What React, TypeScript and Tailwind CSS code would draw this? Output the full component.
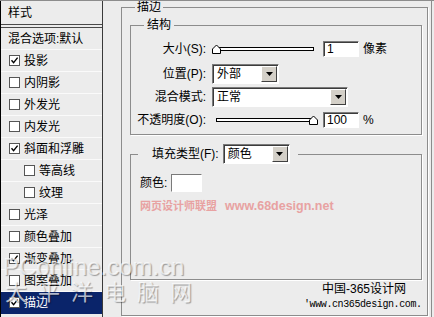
import React from "react";

const font = "font-['Liberation_Sans','Noto_Sans_CJK_SC',sans-serif]";

type Item = { label: string; on?: boolean; sub?: boolean; active?: boolean };

const items: Item[] = [
  { label: "投影", on: true },
  { label: "内阴影" },
  { label: "外发光" },
  { label: "内发光" },
  { label: "斜面和浮雕", on: true },
  { label: "等高线", sub: true },
  { label: "纹理", sub: true },
  { label: "光泽" },
  { label: "颜色叠加" },
  { label: "渐变叠加", on: true },
  { label: "图案叠加" },
  { label: "描边", on: true, active: true },
];

function Check({ on }: { on?: boolean }) {
  return (
    <span className="w-[11px] h-[11px] bg-white border border-[#555] flex items-center justify-center shrink-0">
      {on && (
        <svg width="9" height="9" viewBox="0 0 9 9">
          <path d="M1.5 4.2 L3.6 6.6 L7.6 1.6" stroke="#000" strokeWidth="1.4" fill="none" />
        </svg>
      )}
    </span>
  );
}

function Slider({ at }: { at: number }) {
  const x = 4.5 + at * 97;
  return (
    <svg width="108" height="10" viewBox="0 0 108 10" className="shrink-0">
      <rect x="4.5" y="3.5" width="97" height="3" fill="#fff" stroke="#000" />
      <path d={`M${x - 4} 9.5 V5 L${x} 1 L${x + 4} 5 V9.5 Z`} fill="#fff" stroke="#000" />
    </svg>
  );
}

function Field({ v }: { v: string }) {
  return (
    <div className="w-[36px] h-[16px] bg-white border border-[#7a7a7a] border-b-white border-r-white shadow-[inset_1px_1px_0_#3c3c3c] pl-[3px] text-[12px] leading-[14px]">
      {v}
    </div>
  );
}

function Select({ value, w }: { value: string; w: string }) {
  return (
    <div
      className={`${w} h-[20px] bg-white border border-[#7a7a7a] border-b-white border-r-white shadow-[inset_1px_1px_0_#3c3c3c] flex items-center shrink-0`}
    >
      <span className="flex-1 pl-[4px] text-[12px] leading-[14px]">{value}</span>
      <span className="w-[16px] h-[16px] mr-[1px] bg-[#d4d0c8] border border-white border-r-[#404040] border-b-[#404040] flex items-center justify-center">
        <svg width="7" height="4" viewBox="0 0 7 4">
          <path d="M0 0h7L3.5 4z" fill="#000" />
        </svg>
      </span>
    </div>
  );
}

function Row({ item }: { item: Item }) {
  return (
    <div
      className={`h-[22px] flex items-center gap-[4px] border-b ${item.sub ? "pl-[23px]" : "pl-[8px]"} ${
        item.active ? "bg-[#0a246a] text-white border-[#0a246a]" : "border-[#fafafa]"
      }`}
    >
      <Check on={item.on} />
      <span className="leading-[14px]">{item.label}</span>
    </div>
  );
}

export default function App() {
  return (
    <div
      className={`${font} relative w-[434px] h-[317px] overflow-hidden flex bg-[#ececec] text-black border-t border-[#8c8c8c] text-[12px]`}
    >
      {/* style list */}
      <div className="w-[103px] shrink-0 flex flex-col border-l border-l-black border-r border-r-[#3a3a3a]">
        <div className="h-[24px] flex items-center pl-[7px] border-b border-[#4a4a4a]">样式</div>
        <div className="h-[2px]" />
        <div className="border-t border-[#4a4a4a]">
          <div className="h-[22px] flex items-center pl-[7px] border-b border-[#fafafa]">混合选项:默认</div>
          {items.map((it) => (
            <Row key={it.label} item={it} />
          ))}
        </div>
      </div>

      {/* stroke settings */}
      <div className="flex-1 pl-[18px] pr-[3px] flex">
        <div className="flex-1 flex flex-col pr-[3px] pb-[1px] border-r border-[#8c8c8c]">
          <fieldset className="flex-1 border border-[#8c8c8c] shadow-[1px_1px_0_#fff]">
            <legend className="ml-[13px] px-[2px] leading-[13px]">描边</legend>
            <div className="pl-[8px] pr-[5px]">
              <fieldset className="mt-[5px] border border-[#8c8c8c] shadow-[1px_1px_0_#fff]">
                <legend className="ml-[13px] px-[3px] leading-[13px]">结构</legend>
                <div className="flex flex-col pb-[6px]">
                  <div className="mt-[9px] h-[16px] flex items-center">
                    <span className="w-[75px] text-right">大小(S):</span>
                    <span className="ml-[6px]"><Slider at={0} /></span>
                    <span className="ml-[3px]"><Field v="1" /></span>
                    <span className="ml-[4px]">像素</span>
                  </div>
                  <div className="mt-[7px] h-[20px] flex items-center">
                    <span className="w-[75px] text-right">位置(P):</span>
                    <span className="ml-[6px]"><Select value="外部" w="w-[67px]" /></span>
                  </div>
                  <div className="mt-[3px] h-[20px] flex items-center">
                    <span className="w-[75px] text-right">混合模式:</span>
                    <span className="ml-[6px]"><Select value="正常" w="w-[136px]" /></span>
                  </div>
                  <div className="mt-[5px] h-[16px] flex items-center">
                    <span className="w-[75px] text-right whitespace-nowrap">不透明度(O):</span>
                    <span className="ml-[6px]"><Slider at={1} /></span>
                    <span className="ml-[3px]"><Field v="100" /></span>
                    <span className="ml-[4px]">%</span>
                  </div>
                </div>
              </fieldset>

              <fieldset className="mt-[9px] border border-[#8c8c8c] shadow-[1px_1px_0_#fff]">
                <legend className="ml-[7px] pl-[14px] pr-[8px] flex items-center gap-[4px]">
                  <span>填充类型(F):</span>
                  <Select value="颜色" w="w-[67px]" />
                </legend>
                <div className="pl-[9px] pb-[66px]">
                  <div className="mt-[10px] h-[18px] flex items-center gap-[4px]">
                    <span>颜色:</span>
                    <span className="w-[31px] h-[18px] bg-white border border-[#7a7a7a] border-b-white border-r-white" />
                  </div>
                  <div className="mt-[7px] leading-[14px] font-bold text-[#e8a2a2] whitespace-nowrap flex gap-[8px]">
                    <span className="text-[11px]">网页设计师联盟</span>
                    <span className="text-[12.5px]">www.68design.net</span>
                  </div>
                </div>
              </fieldset>

              <div className="mt-[2px] flex flex-col whitespace-nowrap">
                <span className="ml-[192px] text-[12px] leading-[14px]">中国-365设计网</span>
                <span className="ml-[174px] mt-[3px] font-['Liberation_Mono',monospace] text-[10px] tracking-[-0.4px] leading-[12px]">
                  'www.cn365design.com.
                </span>
              </div>
            </div>
          </fieldset>
        </div>
      </div>

      {/* PConline watermark */}
      <div className="absolute left-[3px] top-[252px] pointer-events-none font-['Liberation_Sans',sans-serif] text-[24px] leading-[28px] text-white/70 [text-shadow:1px_1px_1px_rgba(0,0,0,0.35)]">
        PConline.com.cn
      </div>
      <div className="absolute left-[5px] top-[280px] pointer-events-none text-[22px] leading-[24px] tracking-[11px] text-white/70 [text-shadow:1px_1px_1px_rgba(0,0,0,0.35)] whitespace-nowrap">
        太平洋电脑网
      </div>
    </div>
  );
}
